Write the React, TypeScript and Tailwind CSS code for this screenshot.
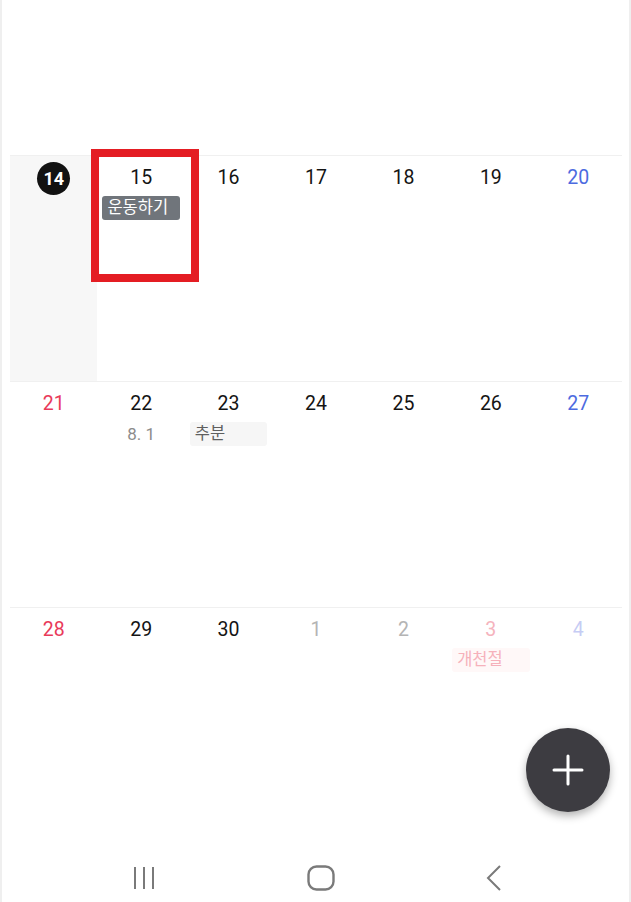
import React from 'react';

type Day = {
  n: number;
  tone: 'black' | 'sun' | 'sat' | 'dim' | 'dimSun' | 'dimSat';
  today?: boolean;
  event?: { label: string; kind: 'dark' | 'light' | 'holiday' | 'lunar' };
};

const toneClass: Record<Day['tone'], string> = {
  black: 'text-[#141414]',
  sun: 'text-[#e93a5a]',
  sat: 'text-[#4d6be0]',
  dim: 'text-[#b4b4b4]',
  dimSun: 'text-[#f5b3bd]',
  dimSat: 'text-[#c6ccf4]',
};

const weeks: Day[][] = [
  [
    { n: 14, tone: 'black', today: true },
    { n: 15, tone: 'black', event: { label: '운동하기', kind: 'dark' } },
    { n: 16, tone: 'black' },
    { n: 17, tone: 'black' },
    { n: 18, tone: 'black' },
    { n: 19, tone: 'black' },
    { n: 20, tone: 'sat' },
  ],
  [
    { n: 21, tone: 'sun' },
    { n: 22, tone: 'black', event: { label: '8. 1', kind: 'lunar' } },
    { n: 23, tone: 'black', event: { label: '추분', kind: 'light' } },
    { n: 24, tone: 'black' },
    { n: 25, tone: 'black' },
    { n: 26, tone: 'black' },
    { n: 27, tone: 'sat' },
  ],
  [
    { n: 28, tone: 'sun' },
    { n: 29, tone: 'black' },
    { n: 30, tone: 'black' },
    { n: 1, tone: 'dim' },
    { n: 2, tone: 'dim' },
    { n: 3, tone: 'dimSun', event: { label: '개천절', kind: 'holiday' } },
    { n: 4, tone: 'dimSat' },
  ],
];

function EventChip({ event }: { event: NonNullable<Day['event']> }) {
  if (event.kind === 'lunar') {
    return <div className="mt-[2px] text-center text-[17px] leading-[24px] text-[#8c8c8c]">{event.label}</div>;
  }
  const styles = {
    dark: 'bg-[#70757b] text-white',
    light: 'bg-[#f6f6f6] text-[#5f5f5f]',
    holiday: 'bg-[#fff8f8] text-[#f6b1bb]',
  }[event.kind];
  return (
    <div className={`mx-[5px] mt-[2px] h-[24px] rounded-[3px] px-[5px] text-[16.5px] leading-[24px] ${styles}`}>
      {event.label}
    </div>
  );
}

function DayCell({ day }: { day: Day }) {
  return (
    <div className={`h-full pt-[6px] ${day.today ? 'bg-[#f7f7f7]' : ''}`}>
      <div className="flex h-[32px] items-center justify-center">
        {day.today ? (
          <div className="flex h-[33px] w-[33px] items-center justify-center rounded-full bg-[#121212] text-[18px] font-bold text-white">
            {day.n}
          </div>
        ) : (
          <span className={`text-[19.5px] font-normal ${toneClass[day.tone]}`}>{day.n}</span>
        )}
      </div>
      {day.event && <EventChip event={day.event} />}
    </div>
  );
}

export default function App() {
  return (
    <div
      className="relative h-[902px] w-full overflow-hidden border-x-2 border-[#efefef] bg-white"
      style={{ fontFamily: "Roboto, 'Noto Sans CJK KR', sans-serif" }}
    >
      {/* calendar body */}
      <div className="pl-[8px] pr-[7px] pt-[155px]">
        {weeks.map((week, i) => (
          <div key={i} className="grid h-[226px] grid-cols-7 border-t border-[#f0f0f0]">
            {week.map((day) => (
              <DayCell key={`${i}-${day.n}`} day={day} />
            ))}
          </div>
        ))}
      </div>

      {/* highlight annotation */}
      <div className="absolute left-[89px] top-[149px] h-[133px] w-[108px] border-[8px] border-[#e41d23]" />

      {/* floating add button */}
      <button className="absolute left-[524px] top-[728px] flex h-[84px] w-[84px] items-center justify-center rounded-full bg-[#3d3c41] shadow-[0_4px_8px_rgba(0,0,0,0.3)]">
        <svg width="32" height="32" viewBox="0 0 32 32" fill="none" stroke="white" strokeWidth="3" strokeLinecap="round">
          <path d="M16 2v28M2 16h28" />
        </svg>
      </button>

      {/* system nav bar */}
      <div className="absolute bottom-0 left-0 right-0 flex h-[52px] items-start">
        <div className="flex w-full items-center justify-between pl-[130px] pr-[126px] pt-[15px]">
          <svg width="24" height="24" viewBox="0 0 24 24" stroke="#7a7a7a" strokeWidth="2">
            <path d="M3 1v22M12 1v22M21 1v22" />
          </svg>
          <svg width="28" height="26" viewBox="0 0 28 26" fill="none" stroke="#7a7a7a" strokeWidth="2.4">
            <rect x="1.5" y="1.5" width="25" height="23" rx="8" />
          </svg>
          <svg width="18" height="26" viewBox="0 0 18 26" fill="none" stroke="#7a7a7a" strokeWidth="2">
            <path d="M15 1L3 13l12 12" />
          </svg>
        </div>
      </div>
    </div>
  );
}
